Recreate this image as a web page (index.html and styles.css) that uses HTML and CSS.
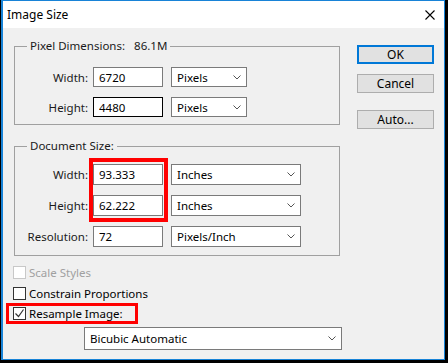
FILE: index.html
```html
<!DOCTYPE html>
<html lang="en">
<head>
  <meta charset="UTF-8" />
  <meta name="viewport" content="width=device-width, initial-scale=1.0" />
  <title>Image Size</title>
  <link rel="stylesheet" href="styles.css">
</head>
<body>

  <div class="window">
    <div class="titlebar">
      <span class="title">Image Size</span>
      <svg class="close" width="10" height="10" viewBox="0 0 10 10">
        <path d="M0.5 0.5 L9.5 9.5 M9.5 0.5 L0.5 9.5" stroke="#000" stroke-width="1.1" fill="none"/>
      </svg>
    </div>

    <div class="content">
      <div class="left">

        <fieldset class="group pixels">
          <legend>Pixel Dimensions:<span class="size">86.1M</span></legend>
          <div class="grid">
            <div class="row r1">
              <label>Width:</label>
              <input class="field" type="text" value="6720">
              <div class="select short"><span>Pixels</span><svg width="8" height="5" viewBox="0 0 8 5"><path d="M0.5 0.5 L4 4 L7.5 0.5" stroke="#555" fill="none"/></svg></div>
            </div>
            <div class="row r2">
              <label>Height:</label>
              <input class="field focus" type="text" value="4480">
              <div class="select short"><span>Pixels</span><svg width="8" height="5" viewBox="0 0 8 5"><path d="M0.5 0.5 L4 4 L7.5 0.5" stroke="#555" fill="none"/></svg></div>
            </div>
          </div>
        </fieldset>

        <fieldset class="group document">
          <legend>Document Size:</legend>
          <div class="grid">
            <div class="row r1">
              <label>Width:</label>
              <input class="field" type="text" value="93.333">
              <div class="select"><span>Inches</span><svg width="8" height="5" viewBox="0 0 8 5"><path d="M0.5 0.5 L4 4 L7.5 0.5" stroke="#555" fill="none"/></svg></div>
            </div>
            <div class="row r2">
              <label>Height:</label>
              <input class="field" type="text" value="62.222">
              <div class="select"><span>Inches</span><svg width="8" height="5" viewBox="0 0 8 5"><path d="M0.5 0.5 L4 4 L7.5 0.5" stroke="#555" fill="none"/></svg></div>
            </div>
            <div class="row r3">
              <label>Resolution:</label>
              <input class="field" type="text" value="72">
              <div class="select"><span>Pixels/Inch</span><svg width="8" height="5" viewBox="0 0 8 5"><path d="M0.5 0.5 L4 4 L7.5 0.5" stroke="#555" fill="none"/></svg></div>
            </div>
            <!-- cadre rouge autour de largeur / hauteur -->
            <div class="highlight"></div>
          </div>
        </fieldset>

        <div class="checks">
          <div class="check disabled"><span class="box"></span>Scale Styles</div>
          <div class="check"><span class="box"></span>Constrain Proportions</div>
          <div class="check marked">
            <span class="box"><svg width="11" height="11" viewBox="0 0 11 11"><path d="M1.5 5.5 L4.5 8.5 L9.5 1.5" stroke="#333" stroke-width="1.2" fill="none"/></svg></span>Resample Image:
          </div>
        </div>

        <div class="select wide"><span>Bicubic Automatic</span><svg width="8" height="5" viewBox="0 0 8 5"><path d="M0.5 0.5 L4 4 L7.5 0.5" stroke="#555" fill="none"/></svg></div>
      </div>

      <div class="buttons">
        <button class="default">OK</button>
        <button>Cancel</button>
        <button class="auto">Auto...</button>
      </div>
    </div>
  </div>

</body>
</html>
```

FILE: styles.css
```css
:root {
  --fond: #f0f0f0;
  --bord: #a0a0a0;
  --texte: #1a1a1a;
  --bleu: #1883d7;
  --rouge: #ff0000;
}

* {
  box-sizing: border-box;
}

body {
  margin: 0;
  background-color: #000;
  font-family: 'Noto Sans', sans-serif;
  font-size: 11.5px;
  color: var(--texte);
}

.window {
  margin: 0 3px 3px 1px;
  height: 360px;
  border: 1px solid var(--bleu);
  border-left-width: 2px;
  background-color: var(--fond);
  display: flex;
  flex-direction: column;
}

.titlebar {
  height: 27px;
  flex-shrink: 0;
  background-color: #fff;
  display: flex;
  align-items: center;
  justify-content: space-between;
  padding: 0 9px 0 4px;
}

.title {
  font-size: 12px;
  color: #000;
}

.content {
  flex: 1;
  display: flex;
  padding: 10px 10px 0 11px;
}

.left {
  width: 326px;
  display: flex;
  flex-direction: column;
}

.group {
  margin: 0;
  padding: 0;
  border: 1px solid var(--bord);
}

.group legend {
  margin-left: 12px;
  padding: 0 3px;
  line-height: 16px;
}

.size {
  margin-left: 9px;
}

.grid {
  display: grid;
  grid-template-columns: 78px 70px auto;
  align-items: center;
}

.row {
  display: contents;
}

.r1 > * { grid-row: 1; }
.r2 > * { grid-row: 2; }
.r3 > * { grid-row: 3; }

.pixels .grid {
  row-gap: 10px;
  padding: 13px 0 7px;
}

.document {
  margin-top: 13px;
}

.document .grid {
  row-gap: 10px;
  padding: 10px 0 8px;
}

.grid label {
  grid-column: 1;
  text-align: right;
  padding-right: 5px;
}

.field {
  grid-column: 2;
  width: 70px;
  height: 20px;
  margin: 0;
  border: 1px solid #7a7a7a;
  background: #fff;
  padding: 0 5px;
  font-family: inherit;
  font-size: 11.5px;
  color: #000;
  outline: none;
}

.document .field {
  height: 21px;
}

.field.focus {
  border-color: #000;
}

.select {
  height: 20px;
  width: 130px;
  border: 1px solid #7a7a7a;
  background: #fff;
  display: flex;
  align-items: center;
  justify-content: space-between;
  padding: 0 5px 0 5px;
  color: #000;
}

.grid .select {
  grid-column: 3;
  margin-left: 8px;
}

.document .select {
  height: 21px;
}

.select.short {
  width: 76px;
}

.highlight {
  grid-column: 2;
  grid-row: 1 / 3;
  align-self: stretch;
  margin: -6px -5px -6px -4px;
  border: 4px solid var(--rouge);
  pointer-events: none;
}

.checks {
  display: flex;
  flex-direction: column;
  gap: 4px;
  margin: 8px 0 0 -1px;
}

.check {
  display: flex;
  align-items: center;
  height: 17px;
  color: #000;
}

.check .box {
  width: 13px;
  height: 13px;
  border: 1px solid #333;
  background: #fff;
  margin-right: 3px;
  display: flex;
  align-items: center;
  justify-content: center;
}

.check.disabled {
  color: #a0a0a0;
}

.check.disabled .box {
  border-color: #c8c8c8;
}

.check.marked {
  align-self: flex-start;
  height: 21px;
  margin: -3px 0 0 -7px;
  padding: 0 12px 0 4px;
  border: 3px solid var(--rouge);
}

.select.wide {
  width: 258px;
  height: 23px;
  margin: 3px 0 0 70px;
}

.buttons {
  margin-left: auto;
  display: flex;
  flex-direction: column;
  gap: 10px;
  padding-top: 7px;
}

.buttons button {
  width: 77px;
  height: 19px;
  padding: 0;
  background-color: #e1e1e1;
  border: 1px solid #adadad;
  font-family: inherit;
  font-size: 12px;
  line-height: 1;
  color: #000;
}

.buttons .default {
  border: 2px solid #0078d7;
}

.buttons .auto {
  margin-top: 7px;
}
```
